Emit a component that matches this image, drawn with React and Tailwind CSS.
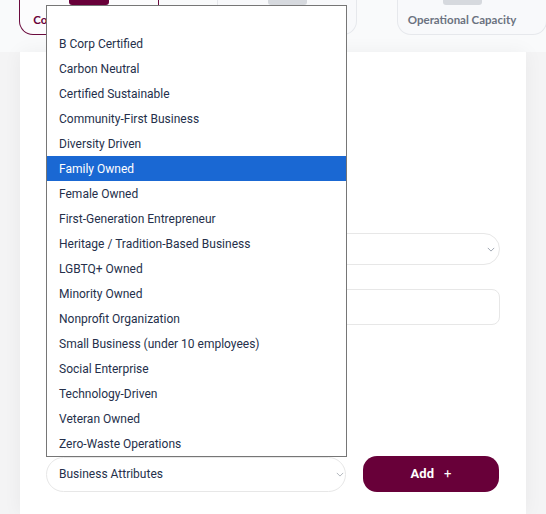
const attributes = [
  "",
  "B Corp Certified",
  "Carbon Neutral",
  "Certified Sustainable",
  "Community-First Business",
  "Diversity Driven",
  "Family Owned",
  "Female Owned",
  "First-Generation Entrepreneur",
  "Heritage / Tradition-Based Business",
  "LGBTQ+ Owned",
  "Minority Owned",
  "Nonprofit Organization",
  "Small Business (under 10 employees)",
  "Social Enterprise",
  "Technology-Driven",
  "Veteran Owned",
  "Zero-Waste Operations",
];

const selected = "Family Owned";

function Chevron({ className }) {
  return (
    <svg viewBox="0 0 10 6" className={className} fill="none" stroke="currentColor" strokeWidth="1.2">
      <path d="M1 1l4 4 4-4" />
    </svg>
  );
}

function Tabs() {
  return (
    <div className="flex h-[52px] bg-[#f9fafb] font-['Lato',sans-serif]">
      <div className="ml-[19px] flex h-[35px] w-[140px] shrink-0 flex-col items-center rounded-b-[14px] border border-t-0 border-[#6a0a3d] bg-[#fcfcfd]">
        <div className="h-[5px] w-10 rounded-b-[3px] bg-[#680039]" />
        <span className="mt-[6px] whitespace-nowrap text-[11.5px] font-bold text-[#680039]">
          Company Information
        </span>
      </div>
      <div className="ml-[58px] flex h-[35px] w-[140px] shrink-0 flex-col items-center rounded-b-[14px] border border-t-0 border-[#e6e8ec] bg-[#f8f9fb]">
        <div className="h-[5px] w-[39px] rounded-b-[3px] bg-[#d6d9de]" />
        <span className="mt-[6px] text-[11.5px] font-bold text-[#6b7280]">Business Details</span>
      </div>
      <div className="ml-[40px] flex h-[35px] w-[150px] shrink-0 flex-col items-start rounded-b-[14px] border border-t-0 border-[#e6e8ec] bg-[#f8f9fb] pl-[10px]">
        <div className="flex w-[108px] flex-col items-center">
          <div className="h-[5px] w-[39px] rounded-b-[3px] bg-[#d6d9de]" />
          <span className="mt-[6px] whitespace-nowrap text-[11.5px] font-bold text-[#6b7280]">
            Operational Capacity
          </span>
        </div>
      </div>
    </div>
  );
}

function OptionList() {
  return (
    <div className="absolute left-[46px] top-[5px] w-[301px] border border-[#767676] bg-white">
      {attributes.map((name, index) => (
        <div
          key={index}
          className={
            name === selected
              ? "flex h-[25px] items-center bg-[#1a68d3] pl-3 text-[12px] text-white"
              : "flex h-[25px] items-center pl-3 text-[12px] text-[#25304b]"
          }
        >
          {name}
        </div>
      ))}
    </div>
  );
}

export default function App() {
  return (
    <div className="relative h-[514px] w-[546px] overflow-hidden bg-[#f4f4f5] font-['Roboto',sans-serif]">
      <Tabs />
      <div className="mx-[20px] h-[462px] bg-white px-[26px] shadow-[0_0_18px_rgba(0,0,0,0.05)]">
        <div className="pt-[181px]">
          <div className="flex h-[32px] items-center justify-end rounded-full border border-[#e7e7e7] pr-[4px] text-[#9ca3af]">
            <Chevron className="h-[5px] w-[8px]" />
          </div>
          <div className="mt-[24px] h-[36px] rounded-[8px] border border-[#e7e7e7]" />
        </div>
        <div className="mt-[131px] flex items-center gap-[17px]">
          <div className="flex h-[35px] w-[300px] items-center justify-between rounded-full border border-[#e7e7e7] pl-3 pr-[1px] text-[12px] text-[#25304b]">
            <span>Business Attributes</span>
            <Chevron className="h-[5px] w-[8px] text-[#b0b4ba]" />
          </div>
          <button
            type="button"
            className="flex h-[36px] w-[136px] items-center justify-center gap-[10px] rounded-[14px] bg-[#680039] text-[13px] font-bold text-white"
          >
            <span>Add</span>
            <span className="font-normal">+</span>
          </button>
        </div>
      </div>
      <OptionList />
    </div>
  );
}
